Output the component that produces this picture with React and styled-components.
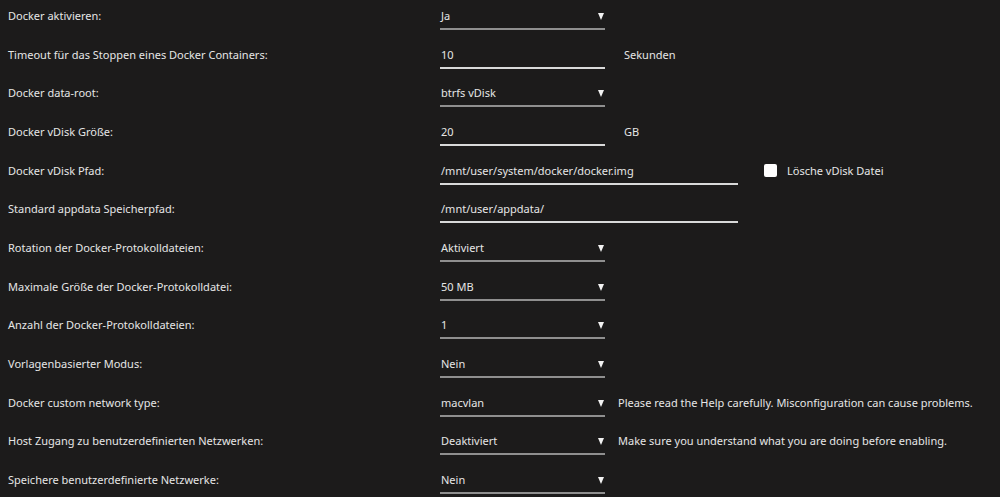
import React from "react";
import styled, { createGlobalStyle } from "styled-components";

const GlobalStyle = createGlobalStyle`
  body {
    margin: 0;
    background-color: #1c1b1b;
    font-family: "Noto Sans", "Open Sans", sans-serif;
    color: #e6e6e6;
  }
`;

const rows = [
  { label: "Docker aktivieren:", type: "select", value: "Ja" },
  {
    label: "Timeout für das Stoppen eines Docker Containers:",
    type: "input",
    value: "10",
    unit: "Sekunden",
  },
  { label: "Docker data-root:", type: "select", value: "btrfs vDisk" },
  { label: "Docker vDisk Größe:", type: "input", value: "20", unit: "GB" },
  {
    label: "Docker vDisk Pfad:",
    type: "input",
    value: "/mnt/user/system/docker/docker.img",
    wide: true,
    check: "Lösche vDisk Datei",
  },
  {
    label: "Standard appdata Speicherpfad:",
    type: "input",
    value: "/mnt/user/appdata/",
    wide: true,
  },
  { label: "Rotation der Docker-Protokolldateien:", type: "select", value: "Aktiviert" },
  { label: "Maximale Größe der Docker-Protokolldatei:", type: "select", value: "50 MB" },
  { label: "Anzahl der Docker-Protokolldateien:", type: "select", value: "1" },
  { label: "Vorlagenbasierter Modus:", type: "select", value: "Nein" },
  {
    label: "Docker custom network type:",
    type: "select",
    value: "macvlan",
    help: "Please read the Help carefully. Misconfiguration can cause problems.",
  },
  {
    label: "Host Zugang zu benutzerdefinierten Netzwerken:",
    type: "select",
    value: "Deaktiviert",
    help: "Make sure you understand what you are doing before enabling.",
  },
  { label: "Speichere benutzerdefinierte Netzwerke:", type: "select", value: "Nein" },
];

const App = () => {
  return (
    <>
      <GlobalStyle />
      <Form>
        {rows.map((row, index) => (
          <Row key={index}>
            <Label>{row.label}</Label>
            {row.type === "select" ? (
              <Select>
                <span>{row.value}</span>
                <Arrow />
              </Select>
            ) : (
              <Input $wide={row.wide}>{row.value}</Input>
            )}
            {row.unit && <Unit>{row.unit}</Unit>}
            {row.help && <Help>{row.help}</Help>}
            {row.check && (
              <CheckLabel>
                <CheckBox />
                {row.check}
              </CheckLabel>
            )}
          </Row>
        ))}
      </Form>
    </>
  );
};

export default App;

const Form = styled.div`
  display: flex;
  flex-direction: column;
`;

const Row = styled.div`
  display: flex;
  align-items: flex-start;
  height: 38.67px;
  font-size: 11px;
`;

const Label = styled.div`
  width: 440px;
  padding-left: 8px;
  padding-top: 6px;
  line-height: 20px;
  box-sizing: border-box;
  flex-shrink: 0;
`;

const Select = styled.div`
  width: 165px;
  box-sizing: border-box;
  padding: 6px 0 0 1px;
  line-height: 20px;
  height: 30px;
  border-bottom: 2px solid #8f8f8f;
  display: flex;
  justify-content: space-between;
  align-items: flex-start;
  color: #e6e6e6;
`;

const Arrow = styled.span`
  width: 0;
  height: 0;
  margin-top: 7px;
  margin-right: 1px;
  border-left: 3.5px solid transparent;
  border-right: 3.5px solid transparent;
  border-top: 7px solid #f2f2f2;
`;

const Input = styled.div`
  width: ${(p) => (p.$wide ? "298px" : "165px")};
  box-sizing: border-box;
  padding: 6px 0 0 1px;
  line-height: 20px;
  height: 30px;
  border-bottom: 2px solid #d9d9d9;
`;

const Unit = styled.div`
  margin-left: 19px;
  padding-top: 6px;
  line-height: 20px;
`;

const Help = styled.div`
  margin-left: 13px;
  padding-top: 6px;
  line-height: 20px;
`;

const CheckLabel = styled.div`
  margin-left: 26px;
  padding-top: 6px;
  line-height: 20px;
  display: flex;
  align-items: center;
  gap: 10px;
`;

const CheckBox = styled.span`
  width: 13px;
  height: 13px;
  background-color: #ffffff;
  border-radius: 2px;
  display: inline-block;
`;
